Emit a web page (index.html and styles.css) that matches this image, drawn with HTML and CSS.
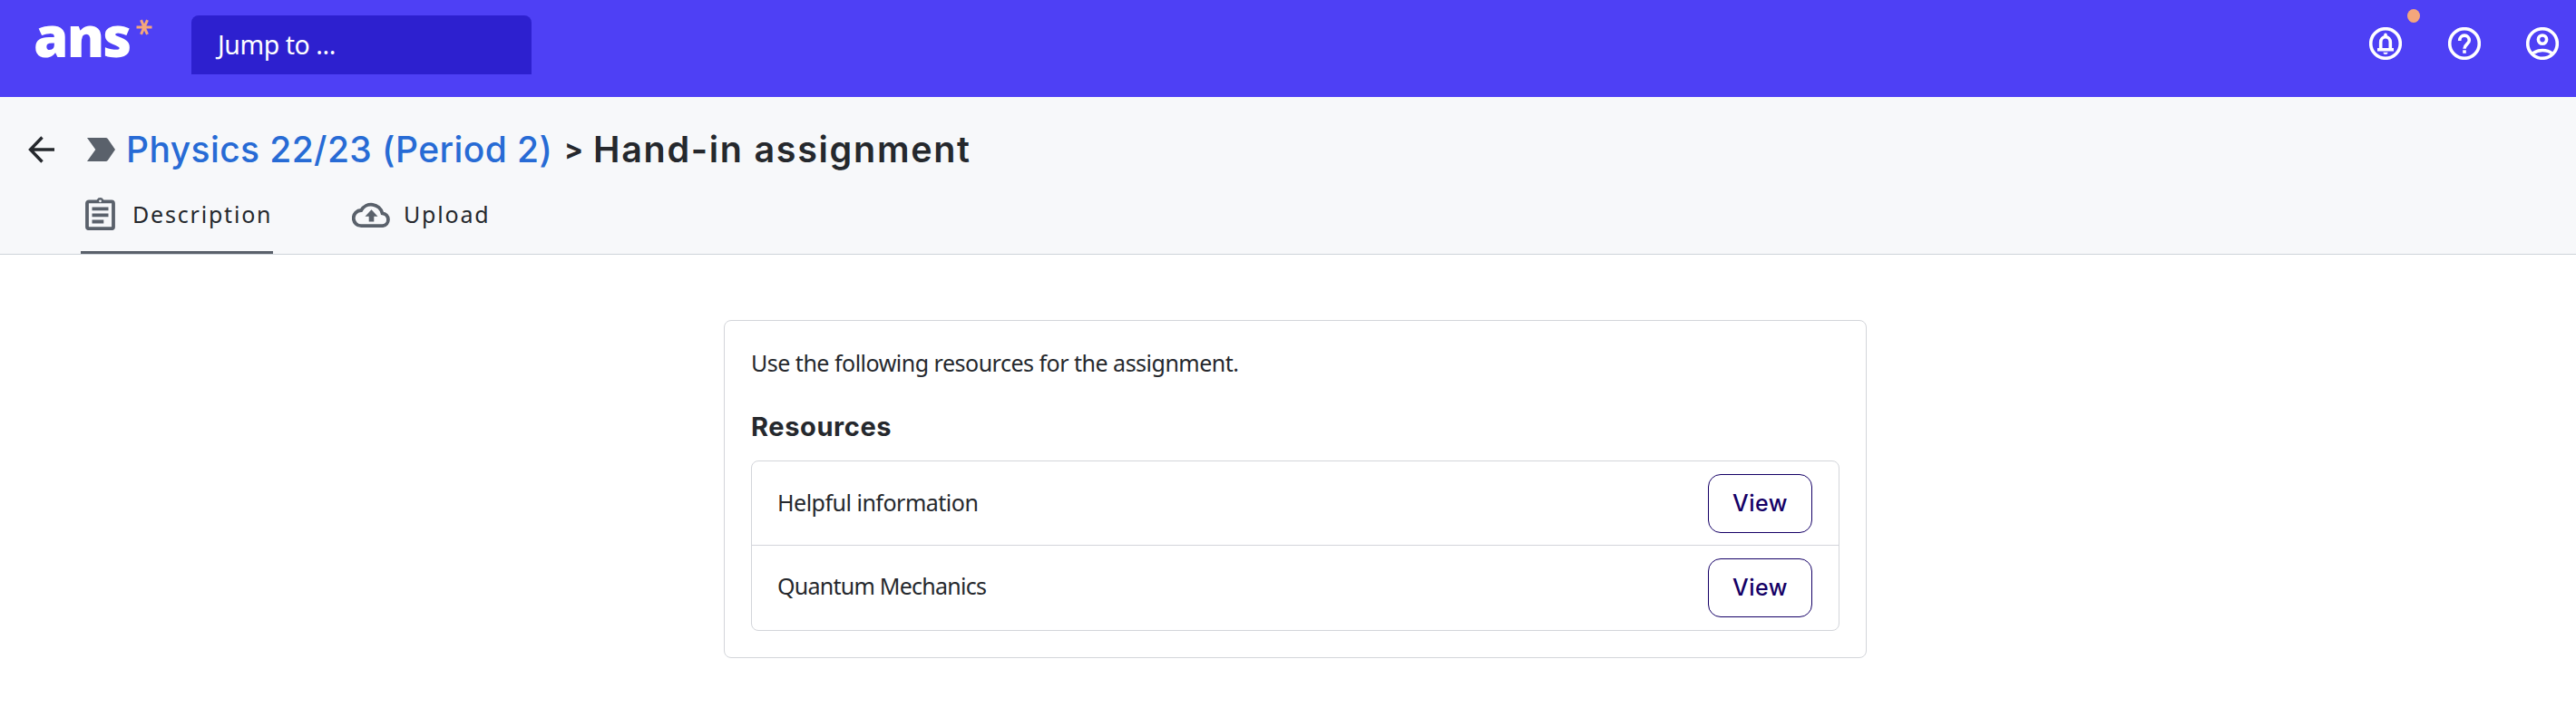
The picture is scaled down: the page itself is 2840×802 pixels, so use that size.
FILE: index.html
```
<!DOCTYPE html>
<html lang="en">
<head>
    <meta charset="utf-8">
    <title>Hand-in assignment</title>
    <link rel="stylesheet" href="styles.css">
</head>
<body>
    <header class="topbar">
        <a class="logo">ans<svg class="logo-star" width="18" height="18" viewBox="0 0 18 18"><path d="M0.500 9h17M5.500 1.200l7 15.600M12.500 1.200l-7 15.600"/></svg></a>
        <div class="search">Jump to ...</div>
        <nav class="topbar-icons">
            <a class="icon-link">
                <svg width="36" height="36" viewBox="0 0 36 36">
                    <circle cx="18" cy="18" r="16.300"/>
                    <path d="M9 24.700h18M12.700 24v-7.500a5.300 5.800 0 0 1 10.600 0V24"/>
                    <path class="solid" d="M16.200 10V8.300a1.800 1.800 0 0 1 3.600 0V10zM15.400 27.800h5.200a2.600 2.200 0 0 1-5.200 0z"/>
                </svg>
                <span class="dot"></span>
            </a>
            <a class="icon-link">
                <svg width="36" height="36" viewBox="0 0 36 36">
                    <circle cx="18" cy="18" r="16.300"/>
                    <path d="M12.700 15v-.6a5.300 5.300 0 0 1 10.600 0c0 4.200-5.300 4.200-5.300 9.400"/>
                    <path class="solid" d="M16.200 25.300h3.600v3.500h-3.600z"/>
                </svg>
            </a>
            <a class="icon-link">
                <svg width="36" height="36" viewBox="0 0 36 36">
                    <circle cx="18" cy="18" r="16.300"/>
                    <circle cx="18" cy="13.600" r="4.600"/>
                    <path d="M7 29.300c6-5 16-5 22 0"/>
                </svg>
            </a>
        </nav>
    </header>

    <section class="page-header">
        <div class="title-row">
            <svg class="back" width="30" height="30" viewBox="0 0 30 30"><path d="M29 15H3M15.500 1.500L2.500 15L15.500 28.500"/></svg>
            <svg class="course" width="31" height="26" viewBox="0 0 31 26"><path d="M0 0h20.500q1.500 0 2.400 1.200L31 13l-8.100 11.800Q22 26 20.500 26H0l9.300-13z"/></svg>
            <h1><a class="course-link">Physics 22/23 (Period 2)</a><span class="sep">&gt;</span><span class="current">Hand-in assignment</span></h1>
        </div>
        <div class="tabs">
            <a class="tab active">
                <svg width="33" height="37" viewBox="0 0 33 37">
                    <path class="line" d="M4 5.300h25a2 2 0 0 1 2 2v25.900a2 2 0 0 1-2 2H4a2 2 0 0 1-2-2V7.300a2 2 0 0 1 2-2z"/>
                    <path class="line" d="M7.500 13.300h18M7.500 20.300h18M7.500 27.500h12.800"/>
                    <path class="fill" d="M11 6c1-1 1.500-1.500 1.800-2.500a4 4 0 0 1 7.400 0C20.500 4.500 21 5 22 6z"/>
                    <circle class="hole" cx="16.500" cy="4.800" r="1.400"/>
                </svg>
                Description
            </a>
            <a class="tab tab-upload">
                <svg width="43" height="30" viewBox="0 0 43 30">
                    <path class="line" d="M10.500 27.200a8.600 8.600 0 0 1-.3-17.200a12.700 12.700 0 0 1 23.300 3.300a7 7 0 0 1 .5 13.900z"/>
                    <path class="fill" d="M21.500 9.300l7 7.500h-4.200v5.800h-5.600v-5.800h-4.200z"/>
                </svg>
                Upload
            </a>
        </div>
    </section>

    <main class="card">
        <p class="intro">Use the following resources for the assignment.</p>
        <h2>Resources</h2>
        <ul class="resources">
            <li><span class="name">Helpful information</span><a class="btn">View</a></li>
            <li><span class="name">Quantum Mechanics</span><a class="btn">View</a></li>
        </ul>
    </main>
</body>
</html>
```
FILE: styles.css
```
* {
    box-sizing: border-box;
}
body {
    margin: 0;
    background: #fff;
    color: #25282d;
    font-family: "Noto Sans", sans-serif;
    font-size: 25px;
    letter-spacing: -0.5px;
}
svg {
    display: block;
    flex: none;
    fill: none;
}

/* top bar */
.topbar {
    display: flex;
    align-items: flex-start;
    height: 107px;
    padding: 17px 19px 0 37px;
    background: #4e40f5;
    color: #fff;
}
.logo {
    display: flex;
    width: 174px;
    font-size: 62px;
    font-weight: 900;
    line-height: 44px;
    letter-spacing: -2px;
}
.logo-star {
    margin: 4px 0 0 7px;
    stroke: #f4a67c;
    stroke-width: 3;
}
.search {
    width: 375px;
    height: 65px;
    padding-left: 29px;
    background: #2d20cf;
    border-radius: 8px 8px 0 0;
    font-size: 28.5px;
    line-height: 64px;
    letter-spacing: -0.45px;
}
.topbar-icons {
    display: flex;
    gap: 50px;
    margin: 13px 0 0 auto;
}
.icon-link {
    position: relative;
}
.icon-link:first-child {
    margin-right: 1px;
}
.icon-link svg {
    stroke: #fff;
    stroke-width: 3.6;
}
.icon-link .solid {
    fill: #fff;
    stroke: none;
}
.dot {
    position: absolute;
    top: -20px;
    left: 42px;
    width: 14px;
    height: 15px;
    border-radius: 50%;
    background: #f4a67c;
}

/* title and tabs */
.page-header {
    height: 174px;
    background: #f7f8fa;
    border-bottom: 1px solid #ced4da;
}
.title-row {
    display: flex;
    align-items: center;
    height: 116px;
    padding-left: 31px;
}
.back {
    stroke: #25282d;
    stroke-width: 3.4;
}
.course {
    margin: 0 12px 0 35px;
    fill: #5a616b;
}
h1 {
    display: flex;
    margin: 0;
    font-family: Inter, sans-serif;
    font-size: 39px;
    font-weight: 500;
    line-height: 60px;
    letter-spacing: 1px;
    white-space: nowrap;
}
.course-link {
    width: 483px;
    color: #276bd5;
    font-weight: 450;
    letter-spacing: 0.4px;
}
.sep {
    width: 32px;
    font-size: 31px;
    font-weight: 700;
}
.current {
    font-size: 39.5px;
    font-weight: 600;
    letter-spacing: 1.7px;
}
.tabs {
    display: flex;
    gap: 80px;
    height: 57px;
    padding-left: 89px;
}
.tab {
    display: flex;
    height: 57px;
    padding-left: 5px;
    line-height: 26px;
    letter-spacing: 1.8px;
}
.tab svg {
    margin-right: 19px;
}
.tab.active {
    width: 212px;
    border-bottom: 3px solid #5a616b;
}
.tab svg {
    margin-top: -6px;
}
.tab-upload svg {
    margin: -1px 14px 0 2px;
}
.line {
    stroke: #5a616b;
    stroke-width: 3.8;
}
.fill {
    fill: #5a616b;
}
.hole {
    fill: #f7f8fa;
}

/* assignment card */
.card {
    width: 1260px;
    height: 373px;
    margin: 72px 0 0 798px;
    padding: 29px;
    border: 1px solid #d3d5da;
    border-radius: 8px;
}
.intro {
    margin: 0;
    line-height: 34px;
}
h2 {
    margin: 35px 0 18px;
    font-family: Inter, sans-serif;
    font-size: 29px;
    font-weight: 700;
    line-height: 38px;
    letter-spacing: 0.6px;
}
.resources {
    margin: 0;
    padding: 0;
    list-style: none;
    border: 1px solid #d3d5da;
    border-radius: 8px;
}
.resources li {
    display: flex;
    align-items: center;
    justify-content: space-between;
    height: 92px;
    padding: 0 29px 0 28px;
}
.resources li + li {
    height: 94px;
    border-top: 1px solid #d3d5da;
    letter-spacing: -0.75px;
}
.name {
    padding-bottom: 3px;
}
li + li .name {
    padding-bottom: 5px;
}
.btn {
    width: 115px;
    height: 65px;
    border: 1px solid #150066;
    border-radius: 14px;
    color: #150066;
    font-family: Inter, sans-serif;
    font-weight: 500;
    line-height: 63px;
    letter-spacing: 0.5px;
    text-align: center;
}
```
